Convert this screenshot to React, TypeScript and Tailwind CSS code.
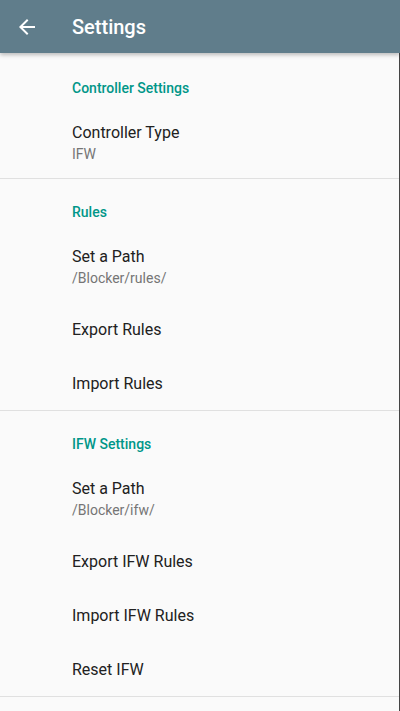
import React from 'react';

type Item = { title: string; summary?: string };
type Section = { title: string; items: Item[] };

const sections: Section[] = [
  { title: 'Controller Settings', items: [{ title: 'Controller Type', summary: 'IFW' }] },
  {
    title: 'Rules',
    items: [
      { title: 'Set a Path', summary: '/Blocker/rules/' },
      { title: 'Export Rules' },
      { title: 'Import Rules' },
    ],
  },
  {
    title: 'IFW Settings',
    items: [
      { title: 'Set a Path', summary: '/Blocker/ifw/' },
      { title: 'Export IFW Rules' },
      { title: 'Import IFW Rules' },
      { title: 'Reset IFW' },
    ],
  },
];

const Pref = ({ title, summary }: Item) =>
  summary ? (
    <div className="pl-[72px] pt-[16px] pb-[14px]">
      <div className="text-[16px] leading-[22px] text-[#212121]">{title}</div>
      <div className="text-[14px] leading-[20px] text-[#757575]">{summary}</div>
    </div>
  ) : (
    <div className="pl-[72px] pt-[2px] h-[54px] flex items-center text-[16px] text-[#212121]">{title}</div>
  );

export default function App() {
  return (
    <div className="w-[400px] h-[711px] overflow-hidden bg-[#fafafa] flex flex-col font-['Roboto',sans-serif]">
      <header className="h-[53px] shrink-0 bg-[#607d8b] flex items-center shadow-[0_2px_4px_rgba(0,0,0,0.25)] z-10">
        <svg className="ml-[15px] w-6 h-6" viewBox="0 0 24 24" fill="white">
          <path d="M20 11H7.83l5.59-5.59L12 4l-8 8 8 8 1.41-1.41L7.83 13H20v-2z" />
        </svg>
        <h1 className="ml-[33px] text-[20px] font-medium text-white">Settings</h1>
      </header>
      <div className="flex-1 border-r border-[#444]">
        {sections.map((s, i) => (
          <section key={s.title} className={i > 0 ? 'border-t border-[#e0e0e0]' : ''}>
            <div
              className={`pl-[72px] ${i === 0 ? 'pt-[25px]' : 'pt-[23px]'} pb-2 text-[14px] leading-[20px] font-medium text-[#009688]`}
            >
              {s.title}
            </div>
            {s.items.map((it, j) => (
              <Pref key={j} {...it} />
            ))}
          </section>
        ))}
        <div className="border-t border-[#e0e0e0]" />
      </div>
    </div>
  );
}
